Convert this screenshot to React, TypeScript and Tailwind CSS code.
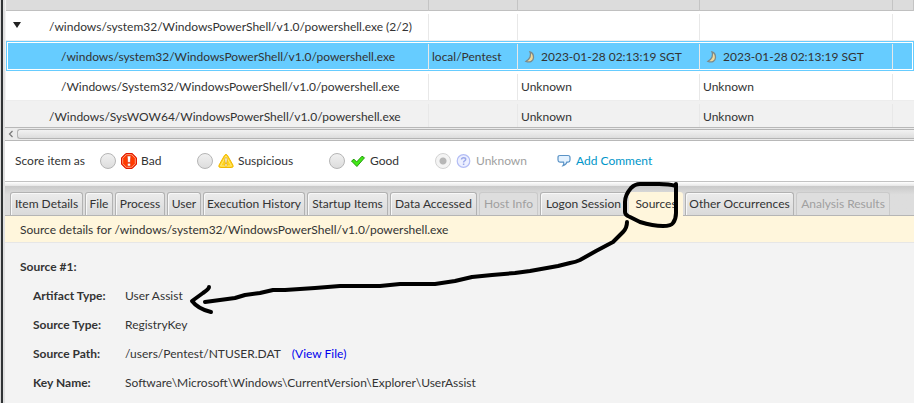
import { ReactNode, useState } from 'react'

interface Item {
  path: string
  indent: string
  user?: string
  times?: string[]
  known?: boolean
}

const ITEMS: Item[] = [
  { path: '/windows/system32/WindowsPowerShell/v1.0/powershell.exe (2/2)', indent: 'pl-[43px]' },
  {
    path: '/windows/system32/WindowsPowerShell/v1.0/powershell.exe',
    indent: 'pl-[55px]',
    user: 'local/Pentest',
    times: ['2023-01-28 02:13:19 SGT', '2023-01-28 02:13:19 SGT'],
    known: true,
  },
  { path: '/Windows/System32/WindowsPowerShell/v1.0/powershell.exe', indent: 'pl-[55px]', times: ['Unknown', 'Unknown'] },
  { path: '/Windows/SysWOW64/WindowsPowerShell/v1.0/powershell.exe', indent: 'pl-[43px]', times: ['Unknown', 'Unknown'] },
]

const ROW_STYLES = [
  'bg-white shadow-[inset_0_-1px_0_#ededed]',
  'bg-[#66ccff] shadow-[inset_0_0_0_1px_#66ccff,inset_0_0_0_2px_#ffffff]',
  'bg-white shadow-[inset_0_-1px_0_#ededed]',
  'bg-[#f1f1f1]',
]

const TABS = [
  { name: 'Item Details', width: 'w-[73px]' },
  { name: 'File', width: 'w-[28px]' },
  { name: 'Process', width: 'w-[50px]' },
  { name: 'User', width: 'w-[34px]' },
  { name: 'Execution History', width: 'w-[102px]' },
  { name: 'Startup Items', width: 'w-[81px]' },
  { name: 'Data Accessed', width: 'w-[87px]' },
  { name: 'Host Info', width: 'w-[59px]', disabled: true },
  { name: 'Logon Session', width: 'w-[87px]' },
  { name: 'Sources', width: 'w-[54px]' },
  { name: 'Other Occurrences', width: 'w-[109px]' },
  { name: 'Analysis Results', width: 'w-[94px]', disabled: true },
]

function MoonIcon() {
  return (
    <svg className="mr-1 shrink-0" width="14" height="14" viewBox="0 0 14 14" aria-hidden="true">
      <path d="M7 2C8.500 5 7 9 3 11.300C7 13 10.500 11 10.500 7.500C10.500 4.500 9 2.500 7 2Z" fill="#f0d99a" stroke="#7a8a8c" strokeWidth="1.300" />
    </svg>
  )
}

function BadIcon() {
  return (
    <svg width="16" height="16" viewBox="0 0 16 16" aria-hidden="true">
      <path d="M4.800 .5H11.200L15.500 4.800V11.200L11.200 15.500H4.800L.5 11.200V4.800Z" fill="#f03000" stroke="#e01800" strokeLinejoin="round" />
      <path d="M5.400 1.700H10.600L14.300 5.400V10.600L10.600 14.300H5.400L1.700 10.600V5.400Z" fill="#ff3a00" stroke="#ffb59a" strokeWidth=".8" />
      <path d="M6.200 3H9.800L9.200 9.500H6.800Z" fill="#fff" stroke="#d02000" strokeWidth=".5" />
      <circle cx="8" cy="11.700" r="1.600" fill="#fff" stroke="#d02000" strokeWidth=".5" />
    </svg>
  )
}

function SuspiciousIcon() {
  return (
    <svg width="16" height="16" viewBox="0 0 16 16" aria-hidden="true">
      <path d="M8 1.500Q9 1.500 9.600 2.600L15 12.200Q15.800 14.300 13.800 14.500H2.200Q.2 14.300 1 12.200L6.400 2.600Q7 1.500 8 1.500Z" fill="#ffd21c" stroke="#f2b800" />
      <path d="M8 3L13.500 13H2.500Z" fill="none" stroke="#ffec80" strokeWidth=".9" />
      <path d="M6.900 5H9.100L8.700 10H7.300Z" fill="#fff" stroke="#c98a00" strokeWidth=".5" />
      <circle cx="8" cy="12" r="1.200" fill="#fff" stroke="#c98a00" strokeWidth=".5" />
    </svg>
  )
}

function GoodIcon() {
  return (
    <svg width="16" height="16" viewBox="0 0 16 16" aria-hidden="true">
      <path d="M1.500 8L4 6.200L6.600 9L12 3.200L14.500 4.800L6.900 13.500Z" fill="#42e817" stroke="#249c0c" strokeWidth="1" strokeLinejoin="round" />
    </svg>
  )
}

function UnknownIcon() {
  return (
    <svg width="16" height="16" viewBox="0 0 16 16" aria-hidden="true">
      <circle cx="7.500" cy="8" r="6.300" fill="#edf0ff" stroke="#b3bdf5" strokeWidth="1.200" />
      <path d="M5.500 6.500Q5.600 4.700 7.600 4.700Q9.700 4.700 9.700 6.300Q9.700 7.300 8.600 7.900Q7.600 8.400 7.600 9.400M7.600 10.600V12" fill="none" stroke="#9ba8ea" strokeWidth="1.500" />
    </svg>
  )
}

function CommentIcon() {
  return (
    <svg width="14" height="14" viewBox="0 0 14 14" aria-hidden="true">
      <path d="M3 1.500H11Q13 1.500 13 3.500V6Q13 8 11 8.200H9.800Q9.500 10.500 6 11.700Q7.300 9.800 6.600 8.200H3Q1 8 1 6V3.500Q1 1.500 3 1.500Z" fill="#e4f2ff" stroke="#5b93c6" strokeWidth="1.200" />
    </svg>
  )
}

interface Score {
  name: string
  width: string
  icon: ReactNode
  disabled?: boolean
}

const SCORES: Score[] = [
  { name: 'Bad', width: 'w-[97px]', icon: <BadIcon /> },
  { name: 'Suspicious', width: 'w-[132px]', icon: <SuspiciousIcon /> },
  { name: 'Good', width: 'w-[106px]', icon: <GoodIcon /> },
  { name: 'Unknown', width: 'w-[122px]', icon: <UnknownIcon />, disabled: true },
]

function ItemTable() {
  return (
    <div className="h-[127px] overflow-hidden">
      <table className="w-full table-fixed border-collapse">
        <colgroup>
          <col className="w-[423px]" />
          <col className="w-[89px]" />
          <col className="w-[182px]" />
          <col className="w-[193px]" />
          <col />
        </colgroup>
        <thead>
          <tr className="h-[11px] bg-[#dcdcdc] shadow-[inset_0_-1px_0_#c0c0c0]">
            {['path', 'user', 'start', 'end', 'more'].map(key => (
              <th key={key} className="p-0">
                <div className="h-[11px] border-r border-[#c4c4c4]" />
              </th>
            ))}
          </tr>
        </thead>
        <tbody>
          {ITEMS.map((item, i) => (
            <tr key={item.path} className={`h-[30px] ${ROW_STYLES[i]}`}>
              <td className="p-0 pt-[3px] pb-px">
                <div className={`relative flex h-[26px] items-center border-r border-[#e8e8e8] whitespace-nowrap ${item.indent}`}>
                  {i === 0 && (
                    <button aria-label="Collapse" className="absolute top-2 left-[7px]">
                      <svg width="8" height="6" viewBox="0 0 8 6"><path d="M0 0H8L4 6Z" fill="#222" /></svg>
                    </button>
                  )}
                  {item.path}
                </div>
              </td>
              <td className="p-0 pt-[3px] pb-px">
                <div className="flex h-[26px] items-center border-r border-[#e8e8e8] pl-[3px] whitespace-nowrap">{item.user}</div>
              </td>
              {[0, 1].map(n => (
                <td key={n} className="p-0 pt-[3px] pb-px">
                  <div className={`flex h-[26px] items-center border-r border-[#e8e8e8] whitespace-nowrap ${item.known ? 'pl-[5px]' : 'pl-[3px]'}`}>
                    {item.known && <MoonIcon />}
                    {item.times?.[n]}
                  </div>
                </td>
              ))}
              <td className="p-0" />
            </tr>
          ))}
        </tbody>
      </table>
    </div>
  )
}

function ScoreBar() {
  const [score, setScore] = useState('Unknown')
  return (
    <div className="flex h-10 items-center bg-white pl-[10px]">
      <span className="w-[85px] whitespace-nowrap">Score item as</span>
      {SCORES.map(s => (
        <label key={s.name} className={`flex items-center ${s.width} ${s.disabled ? 'text-[#a0a0a0]' : ''}`}>
          <input
            type="radio"
            name="score"
            checked={score === s.name}
            disabled={s.disabled}
            onChange={() => setScore(s.name)}
            className="mr-[5px] h-4 w-4 shrink-0 appearance-none rounded-full border border-[#b5b5b5] bg-linear-to-b from-[#f0f0f0] to-[#dddddd] checked:bg-[radial-gradient(circle,#888_3px,#eee_4px)] disabled:opacity-60"
          />
          {s.icon}
          <span className="ml-1">{s.name}</span>
        </label>
      ))}
      <button className="flex items-center gap-[5px] whitespace-nowrap text-[#0096c9]">
        <CommentIcon />
        Add Comment
      </button>
    </div>
  )
}

function DetailTabs() {
  const [active, setActive] = useState('Sources')
  return (
    <div role="tablist" className="flex h-[30px] items-end gap-[2px] border-b border-[#b5b5b5] bg-linear-to-b from-[#c9c9c9] to-[#dddddd] to-30% pl-[5px]">
      {TABS.map(tab => (
        <button
          key={tab.name}
          role="tab"
          aria-selected={active === tab.name}
          disabled={tab.disabled}
          onClick={() => setActive(tab.name)}
          className={`flex shrink-0 items-center justify-center rounded-t-[3px] whitespace-nowrap ${tab.width} ${
            active === tab.name
              ? '-mb-px h-6 bg-[#fff6dc]'
              : tab.disabled
                ? 'h-[23px] border border-b-0 border-[#cacaca] bg-[#dedede] text-[#a0a0a0]'
                : 'h-[23px] border border-b-0 border-[#b2b2b2] bg-linear-to-b from-[#ececec] to-[#dadada] shadow-[inset_1px_1px_0_#f8f8f8]'
          }`}
        >
          {tab.name}
        </button>
      ))}
    </div>
  )
}

function Detail({ label, children }: { label: string; children: ReactNode }) {
  return (
    <div className="flex h-[29px] items-center">
      <dt className="w-[92px] font-bold">{label}</dt>
      <dd>{children}</dd>
    </div>
  )
}

// Hand-drawn marker pointing from the Sources tab to the artifact type
function Marker() {
  return (
    <svg className="pointer-events-none absolute top-0 left-0" width="914" height="403" viewBox="0 0 914 403" fill="none" stroke="#000" strokeWidth="4" strokeLinecap="round" strokeLinejoin="round" aria-hidden="true">
      <path d="M676 186Q669 184 659 184L640 184Q635 184 631 188Q625 195 625 202V212Q625 215 630 217L640 222Q653 226 663 226Q671 226 673 223Q676 219 676 213V184" />
      <path d="M627 222Q627 228 623 232L613 242L596 251L580 260Q576 262 570 263L558 266L530 271L515 273L492 275L472 277L455 281L435 284L400 284L380 286L340 286L315 288L285 290H273L260 293L245 295L235 298L205 302" />
      <path d="M209 287Q209 289 203 293L192 301Q198 309 211 312" />
    </svg>
  )
}

export default function App() {
  return (
    <div className="relative flex min-h-screen overflow-hidden bg-[#f3f3f3] font-['Lato','Noto_Sans',sans-serif] text-xs leading-4 text-[#333]">
      <div className="w-[5px] shrink-0 border-r-2 border-l border-r-[#e0e0e0] border-l-[#d8d8d8] bg-[#303335]" />
      <main className="min-w-0 flex-1">
        <div className="pl-px">
          <ItemTable />
        </div>
        <div className="flex h-[14px] items-center border-y border-[#b8b8b8] bg-[#ebebeb]">
          <svg className="mx-[3px] shrink-0" width="6" height="8" viewBox="0 0 6 8" aria-hidden="true">
            <path d="M4.500 1L1.500 4L4.500 7" fill="none" stroke="#777" strokeWidth="1.200" />
          </svg>
          <div className="h-[10px] flex-1 rounded-l-[3px] border border-r-0 border-[#b4b4b4] bg-linear-to-b from-[#f2f2f2] to-[#dddddd]" />
        </div>
        <ScoreBar />
        <div className="h-[5px] border-t border-[#c2c2c2] bg-linear-to-b from-white to-[#e6e6e6]" />
        <DetailTabs />
        <div className="flex h-[27px] items-center border-b border-[#e6e6e6] bg-[#fff6dc] pt-px pl-[15px]">
          Source details for /windows/system32/WindowsPowerShell/v1.0/powershell.exe
        </div>
        <section className="px-[15px] pt-4">
          <h2 className="font-bold">Source #1:</h2>
          <dl className="mt-[6px] pl-[13px]">
            <Detail label="Artifact Type:">User Assist</Detail>
            <Detail label="Source Type:">RegistryKey</Detail>
            <Detail label="Source Path:">
              /users/Pentest/NTUSER.DAT
              <a href="#file" className="ml-[11px] text-[#0000ee]">(View File)</a>
            </Detail>
            <Detail label="Key Name:">Software\Microsoft\Windows\CurrentVersion\Explorer\UserAssist</Detail>
          </dl>
        </section>
      </main>
      <Marker />
    </div>
  )
}
